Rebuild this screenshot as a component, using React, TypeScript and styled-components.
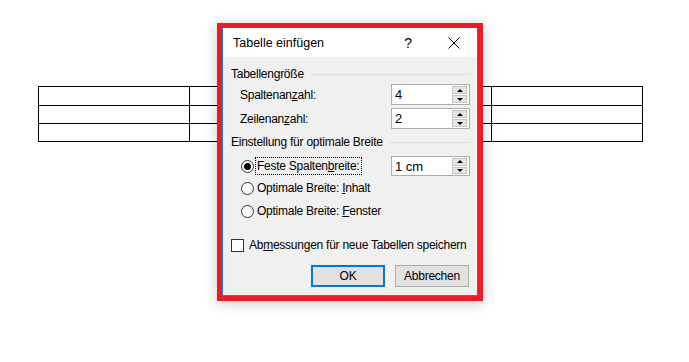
import React from "react";
import styled, { createGlobalStyle } from "styled-components";

const GlobalStyle = createGlobalStyle`
  html, body {
    margin: 0;
    padding: 0;
    background: #fff;
  }
  body {
    font-family: "Segoe UI", "Liberation Sans", Arial, sans-serif;
    font-size: 12px;
    letter-spacing: -0.25px;
    color: #000;
  }
`;

const Page = styled.div`
  position: relative;
  width: 689px;
  height: 362px;
  padding: 86px 0 0 38px;
  box-sizing: border-box;
  overflow: hidden;
`;

const DocTable = styled.table`
  border-collapse: collapse;
  width: 605px;
  table-layout: fixed;
  td {
    border: 1px solid #000;
    height: 17px;
    padding: 0;
  }
  tr:first-child td {
    height: 18px;
  }
`;

const Highlight = styled.div`
  position: absolute;
  left: 217px;
  top: 23px;
  width: 266px;
  height: 278px;
  box-sizing: border-box;
  border: 5px solid #ec1c24;
  box-shadow: 0 2px 12px rgba(0, 0, 0, 0.22);
  background: #f0f0f0;
`;

const Window = styled.div`
  height: 100%;
  box-sizing: border-box;
  border: 1px solid #1c7fd6;
  border-top: none;
  display: flex;
  flex-direction: column;
`;

const TitleBar = styled.div`
  height: 29px;
  background: #fff;
  display: flex;
  align-items: center;
  padding-left: 10px;
  flex-shrink: 0;
`;

const TitleText = styled.div`
  flex: 1;
  font-size: 12.5px;
  letter-spacing: 0;
  padding-top: 1px;
`;

const TitleButton = styled.div`
  width: 46px;
  height: 29px;
  display: flex;
  align-items: center;
  justify-content: center;
  font-size: 14px;
`;

const Body = styled.div`
  flex: 1;
  padding: 9px 7px 0 8px;
  display: flex;
  flex-direction: column;
  white-space: nowrap;
`;

const GroupHeader = styled.div<{ $top: number }>`
  height: 16px;
  margin-top: ${(p) => p.$top}px;
  display: flex;
  align-items: center;
  gap: 6px;
  &::after {
    content: "";
    flex: 1;
    height: 1px;
    background: #dcdcdc;
  }
`;

const FieldRow = styled.div<{ $top: number }>`
  height: 21px;
  margin-top: ${(p) => p.$top}px;
  padding-left: 9px;
  display: flex;
  align-items: center;
`;

const FieldLabel = styled.span`
  flex: 1;
`;

const SpinBox = styled.div<{ $h: number }>`
  width: 79px;
  height: ${(p) => p.$h}px;
  box-sizing: border-box;
  border: 1px solid #adadad;
  background: #fff;
  display: flex;
  align-items: center;
  padding: 1px 2px 1px 0;
`;

const SpinValue = styled.span`
  flex: 1;
  padding-left: 3px;
  font-size: 13px;
  letter-spacing: 0;
`;

const SpinButtons = styled.div`
  width: 15px;
  height: 100%;
  display: flex;
  flex-direction: column;
  gap: 1px;
`;

const SpinArrow = styled.div<{ $down?: boolean }>`
  flex: 1;
  background: #e5e5e5;
  border: 1px solid #c4c4c4;
  display: flex;
  align-items: center;
  justify-content: center;
  &::before {
    content: "";
    width: 0;
    height: 0;
    border-left: 3px solid transparent;
    border-right: 3px solid transparent;
    ${(p) =>
      p.$down ? "border-top: 3px solid #000;" : "border-bottom: 3px solid #000;"}
  }
`;

const RadioRow = styled.div<{ $top?: number }>`
  height: 22px;
  margin-top: ${(p) => p.$top ?? 0}px;
  padding-left: 10px;
  display: flex;
  align-items: center;
`;

const RadioCircle = styled.span<{ $checked?: boolean }>`
  width: 13px;
  height: 13px;
  box-sizing: border-box;
  border: 1px solid #333;
  border-radius: 50%;
  background: #fff;
  display: flex;
  align-items: center;
  justify-content: center;
  margin-right: 1px;
  &::after {
    content: "";
    width: 7px;
    height: 7px;
    border-radius: 50%;
    background: ${(p) => (p.$checked ? "#000" : "transparent")};
  }
`;

const OptionLabel = styled.span<{ $focused?: boolean }>`
  padding: 0 2px 0 1px;
  line-height: 16px;
  border: 1px dotted ${(p) => (p.$focused ? "#000" : "transparent")};
  margin-right: auto;
`;

const CheckRow = styled.div`
  height: 16px;
  margin-top: 15px;
  display: flex;
  align-items: center;
  gap: 5px;
`;

const CheckBox = styled.span`
  width: 13px;
  height: 13px;
  box-sizing: border-box;
  border: 1px solid #333;
  background: #fff;
`;

const ButtonRow = styled.div`
  margin-top: 12px;
  padding-right: 1px;
  display: flex;
  justify-content: flex-end;
  gap: 10px;
`;

const Button = styled.div<{ $default?: boolean }>`
  width: 74px;
  height: 22px;
  box-sizing: border-box;
  background: #e1e1e1;
  border: ${(p) => (p.$default ? "2px solid #0078d7" : "1px solid #adadad")};
  display: flex;
  align-items: center;
  justify-content: center;
`;

const CloseIcon = () => (
  <svg width="12" height="12" viewBox="0 0 12 12">
    <path d="M0.5 0.5 L11.5 11.5 M11.5 0.5 L0.5 11.5" stroke="#000" strokeWidth="1" fill="none" />
  </svg>
);

const Spinner = ({ value, h }: { value: string; h: number }) => (
  <SpinBox $h={h}>
    <SpinValue>{value}</SpinValue>
    <SpinButtons>
      <SpinArrow />
      <SpinArrow $down />
    </SpinButtons>
  </SpinBox>
);

const App = () => {
  const rows = [0, 1, 2];
  const cols = [0, 1, 2, 3];

  return (
    <Page>
      <GlobalStyle />
      <DocTable>
        <tbody>
          {rows.map((r) => (
            <tr key={r}>
              {cols.map((c) => (
                <td key={c} />
              ))}
            </tr>
          ))}
        </tbody>
      </DocTable>

      <Highlight>
        <Window>
          <TitleBar>
            <TitleText>Tabelle einfügen</TitleText>
            <TitleButton>?</TitleButton>
            <TitleButton>
              <CloseIcon />
            </TitleButton>
          </TitleBar>
          <Body>
            <GroupHeader $top={0}>Tabellengröße</GroupHeader>
            <FieldRow $top={2}>
              <FieldLabel>
                Spaltenan<u>z</u>ahl:
              </FieldLabel>
              <Spinner value="4" h={21} />
            </FieldRow>
            <FieldRow $top={3}>
              <FieldLabel>
                Zeilenan<u>z</u>ahl:
              </FieldLabel>
              <Spinner value="2" h={21} />
            </FieldRow>

            <GroupHeader $top={5}>Einstellung für optimale Breite</GroupHeader>
            <RadioRow $top={5}>
              <RadioCircle $checked />
              <OptionLabel $focused>
                Feste Spalten<u>b</u>reite:
              </OptionLabel>
              <Spinner value="1 cm" h={20} />
            </RadioRow>
            <RadioRow>
              <RadioCircle />
              <OptionLabel>
                Optimale Breite: <u>I</u>nhalt
              </OptionLabel>
            </RadioRow>
            <RadioRow $top={1}>
              <RadioCircle />
              <OptionLabel>
                Optimale Breite: <u>F</u>enster
              </OptionLabel>
            </RadioRow>

            <CheckRow>
              <CheckBox />
              <span>
                Ab<u>m</u>essungen für neue Tabellen speichern
              </span>
            </CheckRow>

            <ButtonRow>
              <Button $default>OK</Button>
              <Button>Abbrechen</Button>
            </ButtonRow>
          </Body>
        </Window>
      </Highlight>
    </Page>
  );
};

export default App;
